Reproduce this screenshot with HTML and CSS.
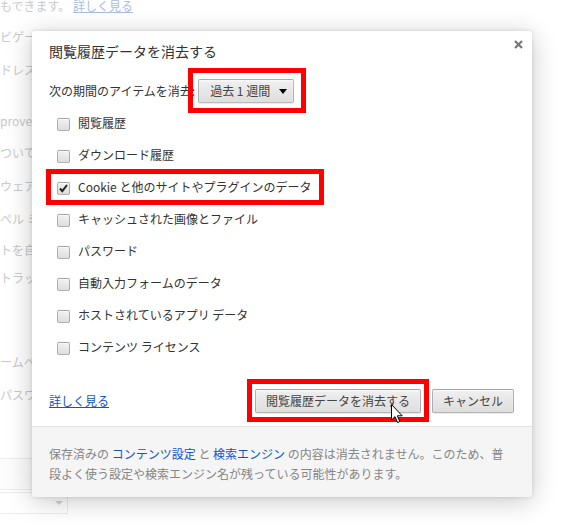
FILE: index.html
```html
<!DOCTYPE html>
<html lang="ja">
<head>
<meta charset="utf-8">
<title>閲覧履歴データを消去する</title>
<link rel="stylesheet" href="styles.css">
</head>
<body>
<div class="page">
  <div class="bg-col">
    <p class="bg-line l0">もできます。 <span class="bg-link">詳しく見る</span></p>
    <p class="bg-line l1">ビゲーション</p>
    <p class="bg-line l2">ドレスバー</p>
    <p class="bg-line l3">prove page</p>
    <p class="bg-line l4">ついて</p>
    <p class="bg-line l5">ウェア</p>
    <p class="bg-line l6">ペル ミス</p>
    <p class="bg-line l7">トを自動</p>
    <p class="bg-line l8">トラッキング</p>
    <p class="bg-line l9">ームページ</p>
    <p class="bg-line l10">パスワード</p>
    <div class="bg-field f1"></div>
    <div class="bg-field f2"><span class="bg-arrow"></span></div>
  </div>
</div>

<div class="dialog">
  <div class="close"><svg width="9" height="9" viewBox="0 0 9 9"><path d="M1 1 L8 8 M8 1 L1 8" stroke="#777" stroke-width="2.2" fill="none"/></svg></div>
  <div class="content">
    <h1 class="title">閲覧履歴データを消去する</h1>
    <div class="period">
      <span class="period-label">次の期間のアイテムを消去:</span>
      <span class="select"><span>過去 1 週間</span><span class="tri"></span></span>
    </div>
    <ul class="checks">
      <li class="row"><span class="box"></span><span class="label">閲覧履歴</span></li>
      <li class="row"><span class="box"></span><span class="label">ダウンロード履歴</span></li>
      <li class="row"><span class="box"><svg width="11" height="11" viewBox="0 0 11 11"><path d="M2 5.5 L4.3 8.2 L9 2" stroke="#222" stroke-width="2" fill="none"/></svg></span><span class="label">Cookie と他のサイトやプラグインのデータ</span></li>
      <li class="row"><span class="box"></span><span class="label">キャッシュされた画像とファイル</span></li>
      <li class="row"><span class="box"></span><span class="label">パスワード</span></li>
      <li class="row"><span class="box"></span><span class="label">自動入力フォームのデータ</span></li>
      <li class="row"><span class="box"></span><span class="label">ホストされているアプリ データ</span></li>
      <li class="row"><span class="box"></span><span class="label">コンテンツ ライセンス</span></li>
    </ul>
    <div class="actions">
      <a class="link" href="#">詳しく見る</a>
      <div class="btns">
        <button class="btn">閲覧履歴データを消去する</button>
        <button class="btn">キャンセル</button>
      </div>
    </div>
  </div>
  <div class="footer">保存済みの <a class="flink" href="#">コンテンツ設定</a> と <a class="flink" href="#">検索エンジン</a> の内容は消去されません。このため、普段よく使う設定や検索エンジン名が残っている可能性があります。</div>

  <div class="mark mark-period"></div>
  <div class="mark mark-cookie"></div>
  <div class="mark mark-button"></div>
  <svg class="cursor" width="13" height="20" viewBox="0 0 13 20"><path d="M0.5 0.5 L0.5 16 L4 12.6 L6.6 18.6 L8.8 17.6 L6.3 11.8 L11.2 11.8 Z" fill="#fff" stroke="#000" stroke-width="1"/></svg>
</div>
</body>
</html>
```

FILE: styles.css
```css
html, body {
  margin: 0;
  padding: 0;
}
body {
  width: 563px;
  height: 530px;
  overflow: hidden;
  background: #fff;
  position: relative;
  font-family: "Noto Sans CJK JP", "Noto Sans", sans-serif;
  font-size: 12px;
}

/* faded page behind the dialog */
.page {
  width: 563px;
  height: 530px;
}
.bg-col {
  display: flex;
  flex-direction: column;
  width: 120px;
}
.bg-line {
  margin: 0;
  line-height: 16px;
  height: 16px;
  white-space: nowrap;
  color: #c9c9c9;
  font-size: 12px;
}
.bg-link {
  color: #a9bce6;
  text-decoration: underline;
}
.l0 { margin-top: 0; line-height: 12px; height: 12px; }
.l1 { margin-top: 17px; }
.l2 { margin-top: 17px; }
.l3 { margin-top: 35px; }
.l4 { margin-top: 16px; }
.l5 { margin-top: 17px; }
.l6 { margin-top: 17px; }
.l7 { margin-top: 15px; }
.l8 { margin-top: 12px; }
.l9 { margin-top: 68px; }
.l10 { margin-top: 17px; }
.bg-field {
  width: 68px;
  box-sizing: border-box;
  border: 1px solid #ececec;
  border-left: none;
}
.f1 {
  margin-top: 55px;
  height: 32px;
  background: #fcfcfc;
}
.f2 {
  margin-top: 2px;
  height: 22px;
  position: relative;
}
.bg-arrow {
  position: absolute;
  left: 55px;
  top: 8px;
  width: 0;
  height: 0;
  border-left: 4px solid transparent;
  border-right: 4px solid transparent;
  border-top: 4px solid #d0d0d0;
}

/* dialog */
.dialog {
  position: absolute;
  left: 32px;
  top: 31px;
  width: 500px;
  background: #fff;
  border-radius: 3px;
  box-shadow: 0 4px 26px rgba(0, 0, 0, 0.22), 0 0 4px rgba(0, 0, 0, 0.12);
  color: #333;
}
.close {
  position: absolute;
  left: 482px;
  top: 9px;
  width: 9px;
  height: 9px;
  line-height: 0;
}
.content {
  padding: 10px 18px 13px 17px;
}
.title {
  margin: 0;
  font-size: 14px;
  font-weight: normal;
  line-height: 20px;
  color: #333;
}
.period {
  margin-top: 18px;
  display: flex;
  align-items: center;
  height: 24px;
}
.period-label {
  line-height: 16px;
  margin-right: 3px;
  margin-top: -1px;
}
.select {
  box-sizing: border-box;
  width: 96px;
  height: 24px;
  display: flex;
  align-items: center;
  justify-content: space-between;
  padding: 0 6px 0 11px;
  border: 1px solid rgba(0, 0, 0, 0.22);
  border-radius: 2px;
  background: linear-gradient(#f0f0f0, #dedede);
  box-shadow: 0 1px 0 rgba(0, 0, 0, 0.08), inset 0 1px 2px rgba(255, 255, 255, 0.75);
  color: #444;
  line-height: 16px;
}
.tri {
  width: 0;
  height: 0;
  border-left: 4.5px solid transparent;
  border-right: 4.5px solid transparent;
  border-top: 5px solid #000;
}
.checks {
  list-style: none;
  margin: 6px 0 0 0;
  padding: 0;
}
.row {
  height: 32px;
  box-sizing: border-box;
  padding: 9px 0 0 8px;
  display: flex;
  align-items: flex-start;
}
.box {
  box-sizing: border-box;
  width: 13px;
  height: 13px;
  border: 1px solid rgba(0, 0, 0, 0.25);
  border-radius: 2px;
  background: linear-gradient(#f0f0f0, #dedede);
  box-shadow: inset 0 1px 1px rgba(255, 255, 255, 0.7);
  margin-right: 8px;
  display: flex;
  align-items: center;
  justify-content: center;
  flex-shrink: 0;
}
.label {
  line-height: 14px;
  margin-top: -2px;
  color: #333;
  white-space: nowrap;
}
.actions {
  margin-top: 24px;
  display: flex;
  align-items: center;
  justify-content: space-between;
}
.link {
  color: #15c;
  text-decoration: underline;
  line-height: 16px;
}
.btns {
  display: flex;
  gap: 11px;
}
.btn {
  font-family: inherit;
  font-size: 12px;
  height: 24px;
  padding: 0 10px;
  margin: 0;
  color: #444;
  line-height: 16px;
  border: 1px solid rgba(0, 0, 0, 0.25);
  border-radius: 2px;
  background: linear-gradient(#f0f0f0, #dedede);
  box-shadow: 0 1px 0 rgba(0, 0, 0, 0.08), inset 0 1px 2px rgba(255, 255, 255, 0.75);
}
.footer {
  border-top: 1px solid #e3e3e3;
  background: #f5f5f5;
  padding: 17px 18px 13px 17px;
  line-height: 20px;
  color: #858585;
  border-radius: 0 0 3px 3px;
}
.flink {
  color: #15c;
  text-decoration: none;
}

/* red annotation frames drawn over the dialog */
.mark {
  position: absolute;
  box-sizing: border-box;
  border: 5px solid #f00;
}
.mark-period {
  left: 156px;
  top: 37px;
  width: 118px;
  height: 45px;
}
.mark-cookie {
  left: 14px;
  top: 138px;
  width: 278px;
  height: 36px;
}
.mark-button {
  left: 215px;
  top: 348px;
  width: 182px;
  height: 43px;
}
.cursor {
  position: absolute;
  left: 359px;
  top: 373px;
}
```
